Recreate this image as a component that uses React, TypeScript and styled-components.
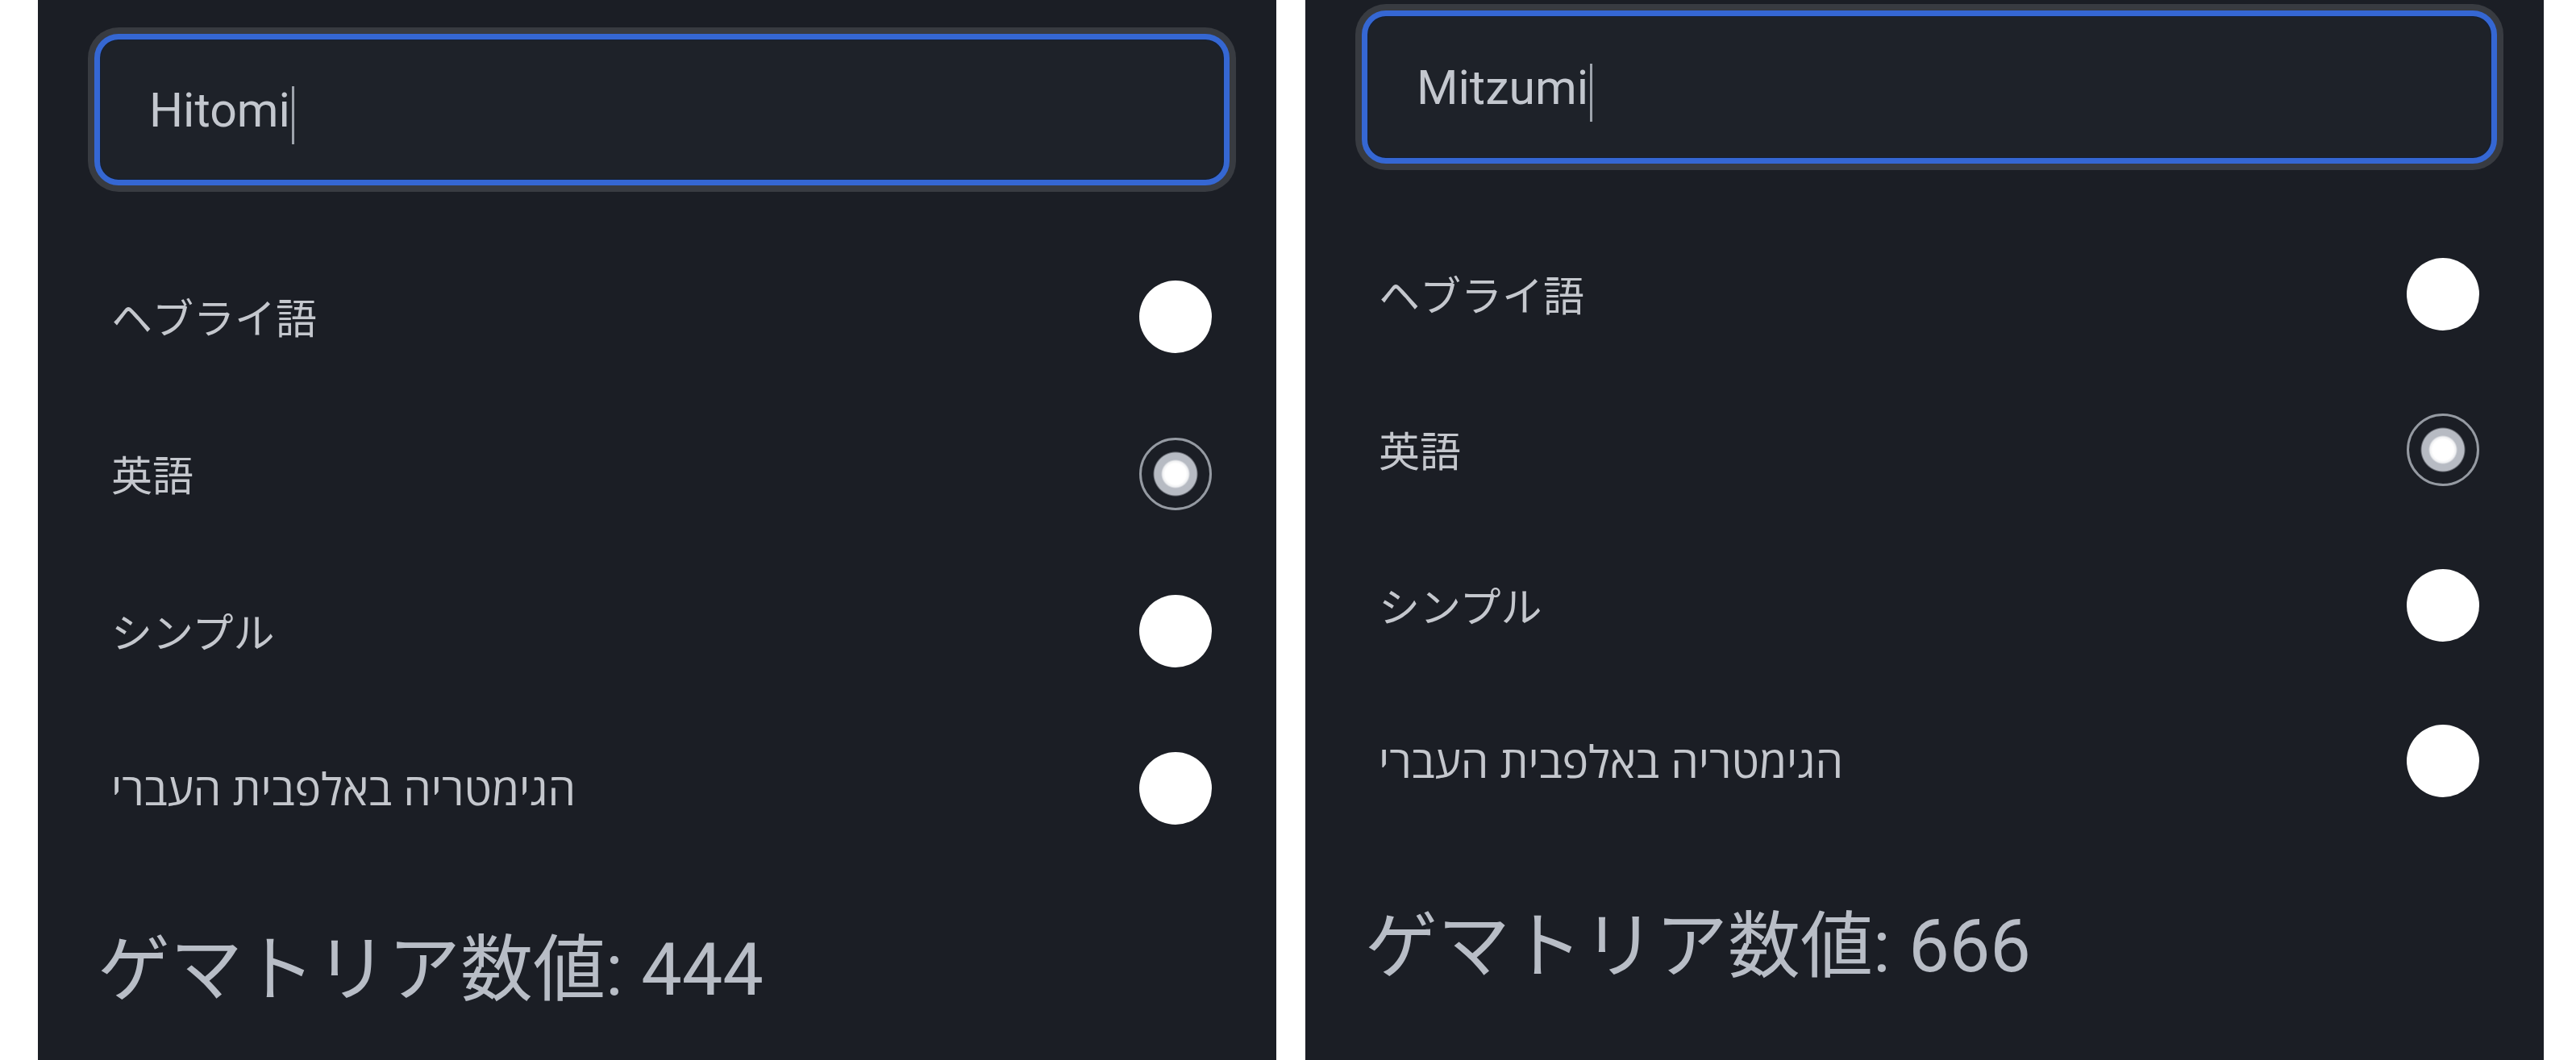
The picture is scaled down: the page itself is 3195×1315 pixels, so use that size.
import React from "react";
import styled, { createGlobalStyle } from "styled-components";

const GlobalStyle = createGlobalStyle`
  html, body {
    margin: 0;
    padding: 0;
    background: #ffffff;
  }
  body {
    font-family: Roboto, "Noto Sans CJK JP", "Open Sans", "DejaVu Sans", sans-serif;
  }
`;

const Stage = styled.div`
  display: flex;
  gap: 36px;
  padding: 0 40px 0 47px;
  height: 1315px;
  overflow: hidden;
  background: #ffffff;
`;

const Panel = styled.section<{ $top: number }>`
  flex: 0 0 1536px;
  height: 1315px;
  box-sizing: border-box;
  background: #1b1e25;
  padding: ${(p) => p.$top}px 58px 0 70px;
  display: flex;
  flex-direction: column;
`;

const Field = styled.div<{ $h: number }>`
  height: ${(p) => p.$h}px;
  box-sizing: border-box;
  border: 7px solid #3567d3;
  border-radius: 30px;
  background: #1e2229;
  box-shadow: 0 0 0 1px #142036 inset, 0 0 0 8px #383b41;
  display: flex;
  align-items: center;
  padding-left: 61px;
  font-family: Roboto, sans-serif;
  font-size: 59px;
  color: #c3c7ce;
`;

const Caret = styled.span`
  display: inline-block;
  width: 3px;
  height: 72px;
  margin-left: 2px;
  margin-top: 14px;
  background: #9da3ab;
`;

const OptionList = styled.div`
  display: flex;
  flex-direction: column;
  margin: 65px 22px 0 21px;
`;

const Row = styled.div<{ $h: number }>`
  height: ${(p) => p.$h}px;
  display: flex;
  align-items: center;
  justify-content: space-between;
`;

const Label = styled.span<{ $hebrew?: boolean }>`
  font-family: ${(p) =>
    p.$hebrew
      ? `"Open Sans", "DejaVu Sans", sans-serif`
      : `"Noto Sans CJK JP", sans-serif`};
  font-size: ${(p) => (p.$hebrew ? 55 : 51)}px;
  color: #c4c7cd;
  line-height: 1;
`;

const Radio = styled.span<{ $checked?: boolean }>`
  width: 90px;
  height: 90px;
  box-sizing: border-box;
  border-radius: 50%;
  flex: 0 0 auto;
  ${(p) =>
    p.$checked
      ? `
    border: 3px solid #959aa2;
    background: radial-gradient(circle, #ffffff 0 13px, #f0f1f3 16px, #b7bbc3 18px 26px, #1b1e25 28px);
  `
      : `
    background: #ffffff;
  `}
`;

const Result = styled.div<{ $gap: number }>`
  margin: ${(p) => p.$gap}px 0 0 4px;
  font-family: "Noto Sans CJK JP", sans-serif;
  font-size: 90px;
  line-height: 1;
  color: #b8bdc6;
  white-space: nowrap;
`;

const Num = styled.span`
  font-family: Roboto, sans-serif;
`;

type PanelData = {
  name: string;
  value: string;
  top: number;
  fieldH: number;
  rowH: number;
  gap: number;
};

const options = [
  { label: "ヘブライ語", hebrew: false, checked: false },
  { label: "英語", hebrew: false, checked: true },
  { label: "シンプル", hebrew: false, checked: false },
  { label: "הגימטריה באלפבית העברי", hebrew: true, checked: false },
];

const panels: PanelData[] = [
  { name: "Hitomi", value: "444", top: 42, fieldH: 188, rowH: 195, gap: 75 },
  { name: "Mitzumi", value: "666", top: 13, fieldH: 190, rowH: 193, gap: 81 },
];

function GematriaPanel({ data }: { data: PanelData }) {
  return (
    <Panel $top={data.top}>
      <Field $h={data.fieldH}>
        {data.name}
        <Caret />
      </Field>
      <OptionList>
        {options.map((o) => (
          <Row key={o.label} $h={data.rowH}>
            <Label $hebrew={o.hebrew}>{o.label}</Label>
            <Radio $checked={o.checked} />
          </Row>
        ))}
      </OptionList>
      <Result $gap={data.gap}>
        ゲマトリア数値<Num>: {data.value}</Num>
      </Result>
    </Panel>
  );
}

export default function App() {
  return (
    <>
      <GlobalStyle />
      <Stage>
        {panels.map((p) => (
          <GematriaPanel key={p.name} data={p} />
        ))}
      </Stage>
    </>
  );
}
